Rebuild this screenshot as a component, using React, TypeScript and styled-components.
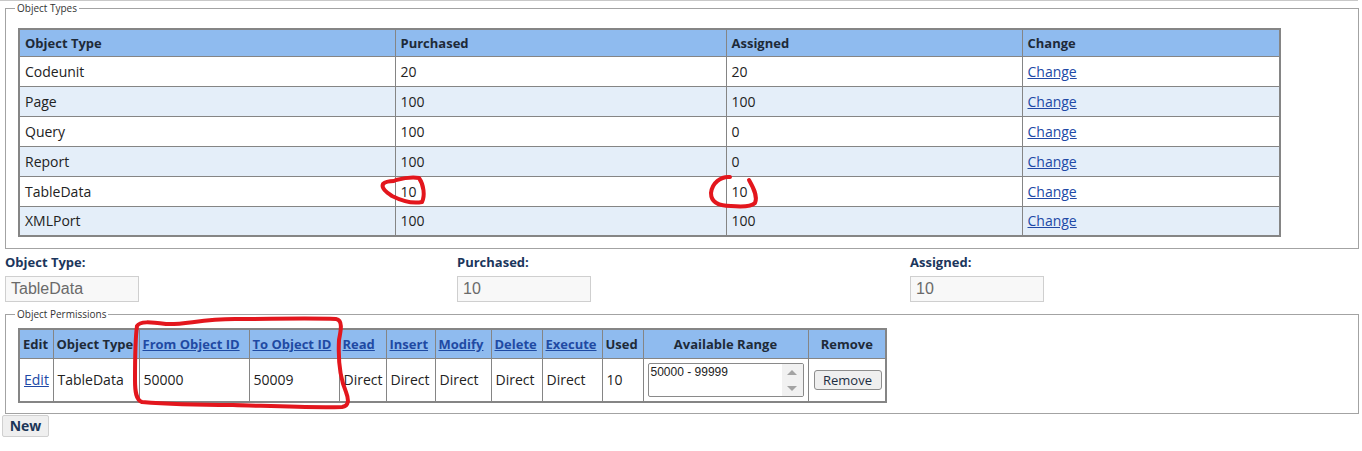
import React from "react";
import styled, { createGlobalStyle } from "styled-components";

const Global = createGlobalStyle`
  html, body { margin: 0; padding: 0; background: #fff; }
  body { font-family: "Open Sans", "Noto Sans", sans-serif; color: #222; }
  * { box-sizing: border-box; }
`;

const Page = styled.div`
  position: relative;
  width: 1362px;
  height: 451px;
  display: flex;
  flex-direction: column;
  align-items: flex-start;
`;

const TopRule = styled.div`
  width: 1358px;
  height: 1px;
  background: #c8c8c8;
`;

const Fieldset = styled.fieldset<{ $pt: number; $pb: number }>`
  width: 1354px;
  margin: 0 0 0 5px;
  padding: ${(p) => p.$pt}px 12px ${(p) => p.$pb}px 12px;
  border: 1px solid #a3a3a3;
  min-width: 0;
`;

const Legend = styled.legend`
  font-size: 10px;
  line-height: 14px;
  color: #333;
  padding: 0 2px;
  margin-left: -3px;
`;

const Table = styled.table<{ $fixedWidth?: number }>`
  border-collapse: collapse;
  border: 2px solid #858585;
  font-size: 14px;
  ${(p) => (p.$fixedWidth ? `table-layout: fixed; width: ${p.$fixedWidth}px;` : "")}
`;

const HeadCell = styled.th<{ $w?: number; $center?: boolean }>`
  background: #8fbbef;
  color: #1e2a38;
  font-weight: 700;
  font-size: 13px;
  text-align: ${(p) => (p.$center ? "center" : "left")};
  border: 1px solid #858585;
  padding: 0 5px;
  white-space: nowrap;
  overflow: hidden;
  ${(p) => (p.$w ? `width: ${p.$w}px;` : "")}
`;

const TypesHead = styled(HeadCell)`
  height: 27px;
`;

const TypesRow = styled.tr<{ $alt: boolean }>`
  background: ${(p) => (p.$alt ? "#e4eef9" : "#fff")};
`;

const TypesCell = styled.td`
  height: 30px;
  padding: 0 5px;
  border: 1px solid #858585;
  color: #222;
  white-space: nowrap;
`;

const Link = styled.a`
  color: #2149a6;
  text-decoration: underline;
  cursor: pointer;
`;

const HeadLink = styled(Link)`
  color: #1f4aa3;
`;

const Fields = styled.div`
  display: grid;
  grid-template-columns: 452px 453px 452px;
  margin: 4px 0 0 5px;
  height: 54px;
`;

const Field = styled.div`
  display: flex;
  flex-direction: column;
  gap: 5px;
`;

const Label = styled.label`
  font-size: 13px;
  font-weight: 700;
  line-height: 18px;
  color: #1b365c;
`;

const ReadInput = styled.div`
  width: 134px;
  height: 26px;
  border: 1px solid #cfcfcf;
  background: #f8f8f8;
  color: #6a6a6a;
  font-family: "Liberation Sans", Arial, sans-serif;
  font-size: 16px;
  line-height: 24px;
  padding-left: 5px;
`;

const PermHead = styled(HeadCell)`
  height: 29px;
  padding: 0 3px;
`;

const PermCell = styled.td`
  height: 44px;
  padding: 0 4px;
  border: 1px solid #858585;
  background: #fff;
  color: #222;
  white-space: nowrap;
`;

const RangeBox = styled.div`
  display: flex;
  width: 156px;
  height: 34px;
  border: 1px solid #8a8a8a;
  border-radius: 2px;
  background: #fff;
  overflow: hidden;
`;

const RangeText = styled.div`
  flex: 1;
  font-family: "Liberation Sans", Arial, sans-serif;
  font-size: 12px;
  line-height: 14px;
  color: #222;
  padding: 1px 2px;
`;

const ScrollTrack = styled.div`
  width: 21px;
  background: #f1f1f1;
  display: flex;
  flex-direction: column;
  justify-content: space-between;
  align-items: center;
  padding: 6px 0 5px;
`;

const Arrow = styled.div<{ $up: boolean }>`
  width: 0;
  height: 0;
  border-left: 5px solid transparent;
  border-right: 5px solid transparent;
  ${(p) => (p.$up ? "border-bottom: 5px solid #a3a3a3;" : "border-top: 5px solid #a3a3a3;")}
`;

const Button = styled.button`
  font-family: "Open Sans", sans-serif;
  background: #efefef;
  border: 1px solid #8d8d8d;
  border-radius: 3px;
  color: #1d2d42;
  cursor: pointer;
`;

const RemoveButton = styled(Button)`
  width: 68px;
  height: 20px;
  font-size: 13px;
  line-height: 16px;
  padding: 0;
  margin-left: 1px;
`;

const NewButton = styled(Button)`
  margin: 1px 0 0 2px;
  width: 47px;
  height: 22px;
  font-size: 14px;
  font-weight: 700;
  line-height: 18px;
  color: #1c3658;
  border: 1px solid #d0d0d0;
  border-radius: 2px;
  padding: 0;
`;

const Marks = styled.svg`
  position: absolute;
  left: 0;
  top: 0;
  pointer-events: none;
`;

const types = [
  ["Codeunit", "20", "20"],
  ["Page", "100", "100"],
  ["Query", "100", "0"],
  ["Report", "100", "0"],
  ["TableData", "10", "10"],
  ["XMLPort", "100", "100"],
];

const permHeads: { label: string; w: number; link?: boolean; center?: boolean }[] = [
  { label: "Edit", w: 34 },
  { label: "Object Type", w: 86 },
  { label: "From Object ID", w: 110, link: true },
  { label: "To Object ID", w: 90, link: true },
  { label: "Read", w: 47, link: true },
  { label: "Insert", w: 49, link: true },
  { label: "Modify", w: 56, link: true },
  { label: "Delete", w: 51, link: true },
  { label: "Execute", w: 60, link: true },
  { label: "Used", w: 41 },
  { label: "Available Range", w: 165, center: true },
  { label: "Remove", w: 78, center: true },
];

export default function App() {
  return (
    <Page>
      <Global />
      <TopRule />
      <Fieldset $pt={13} $pb={11}>
        <Legend>Object Types</Legend>
        <Table>
          <thead>
            <tr>
              <TypesHead $w={376}>Object Type</TypesHead>
              <TypesHead $w={331}>Purchased</TypesHead>
              <TypesHead $w={296}>Assigned</TypesHead>
              <TypesHead $w={258}>Change</TypesHead>
            </tr>
          </thead>
          <tbody>
            {types.map((t, i) => (
              <TypesRow key={t[0]} $alt={i % 2 === 1}>
                <TypesCell>{t[0]}</TypesCell>
                <TypesCell>{t[1]}</TypesCell>
                <TypesCell>{t[2]}</TypesCell>
                <TypesCell>
                  <Link>Change</Link>
                </TypesCell>
              </TypesRow>
            ))}
          </tbody>
        </Table>
      </Fieldset>

      <Fields>
        <Field>
          <Label>Object Type:</Label>
          <ReadInput>TableData</ReadInput>
        </Field>
        <Field>
          <Label>Purchased:</Label>
          <ReadInput>10</ReadInput>
        </Field>
        <Field>
          <Label>Assigned:</Label>
          <ReadInput>10</ReadInput>
        </Field>
      </Fields>

      <Fieldset $pt={7} $pb={10}>
        <Legend>Object Permissions</Legend>
        <Table $fixedWidth={867}>
          <thead>
            <tr>
              {permHeads.map((h) => (
                <PermHead key={h.label} $w={h.w} $center={h.center}>
                  {h.link ? <HeadLink>{h.label}</HeadLink> : h.label}
                </PermHead>
              ))}
            </tr>
          </thead>
          <tbody>
            <tr>
              <PermCell>
                <Link>Edit</Link>
              </PermCell>
              <PermCell>TableData</PermCell>
              <PermCell>50000</PermCell>
              <PermCell>50009</PermCell>
              <PermCell>Direct</PermCell>
              <PermCell>Direct</PermCell>
              <PermCell>Direct</PermCell>
              <PermCell>Direct</PermCell>
              <PermCell>Direct</PermCell>
              <PermCell>10</PermCell>
              <PermCell>
                <RangeBox>
                  <RangeText>50000 - 99999</RangeText>
                  <ScrollTrack>
                    <Arrow $up />
                    <Arrow $up={false} />
                  </ScrollTrack>
                </RangeBox>
              </PermCell>
              <PermCell>
                <RemoveButton>Remove</RemoveButton>
              </PermCell>
            </tr>
          </tbody>
        </Table>
      </Fieldset>

      <NewButton>New</NewButton>

      <Marks width="1362" height="451" viewBox="0 0 1362 451">
        <g fill="none" stroke="#e3161d" strokeWidth="4" strokeLinecap="round" strokeLinejoin="round">
          <path d="M396 180 C404 178, 413 177, 419 178 C424 185, 425 196, 422 202 C412 204, 400 200, 392 196 C386 192, 381 188, 383 184 C386 181, 390 181, 394 181" />
          <path d="M730 177 C721 176, 712 183, 711 193 C711 202, 718 206, 731 206 C742 207, 751 207, 755 203 C758 196, 753 187, 749 180" />
          <path d="M137 326 C140 321, 150 322, 166 324 C185 325, 200 319, 235 319 C270 319, 310 318, 336 319 C343 320, 341 330, 339 340 C338 360, 340 378, 346 392 C349 400, 349 406, 342 407 C310 408, 270 406, 233 405 C200 405, 165 404, 142 402 C136 400, 135 392, 135 380 C135 360, 135 340, 137 326" />
        </g>
      </Marks>
    </Page>
  );
}
